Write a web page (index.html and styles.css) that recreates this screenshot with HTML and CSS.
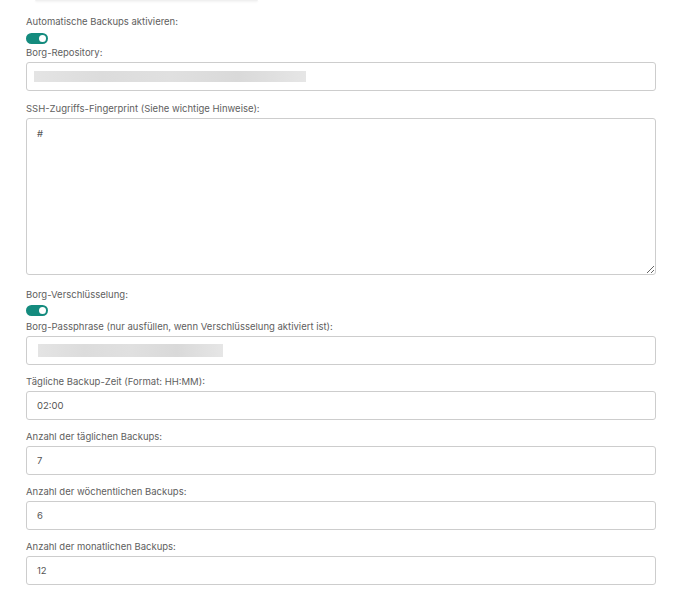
FILE: index.html
```html
<!DOCTYPE html>
<html lang="de">
<head>
<meta charset="utf-8">
<title>Backup-Einstellungen</title>
<link rel="stylesheet" href="styles.css">
</head>
<body>
<div class="page">
  <div class="topbar"></div>

  <div class="field">
    <label class="label">Automatische Backups aktivieren:</label>
    <span class="toggle on"><span class="knob"></span></span>
  </div>

  <div class="field">
    <label class="label">Borg-Repository:</label>
    <div class="input"><span class="blur blur-repo"></span></div>
  </div>

  <div class="field field-ssh">
    <label class="label">SSH-Zugriffs-Fingerprint (Siehe wichtige Hinweise):</label>
    <textarea class="textarea">#</textarea>
  </div>

  <div class="field">
    <label class="label">Borg-Verschlüsselung:</label>
    <span class="toggle on second"><span class="knob"></span></span>
  </div>

  <div class="field">
    <label class="label">Borg-Passphrase (nur ausfüllen, wenn Verschlüsselung aktiviert ist):</label>
    <div class="input"><span class="blur blur-pass"></span></div>
  </div>

  <div class="field">
    <label class="label">Tägliche Backup-Zeit (Format: HH:MM):</label>
    <div class="input">02:00</div>
  </div>

  <div class="field">
    <label class="label">Anzahl der täglichen Backups:</label>
    <div class="input">7</div>
  </div>

  <div class="field">
    <label class="label">Anzahl der wöchentlichen Backups:</label>
    <div class="input">6</div>
  </div>

  <div class="field">
    <label class="label">Anzahl der monatlichen Backups:</label>
    <div class="input">12</div>
  </div>
</div>
</body>
</html>
```

FILE: styles.css
```css
html, body {
  margin: 0;
  padding: 0;
  background: #ffffff;
}
body {
  font-family: Inter, "Noto Sans", "Liberation Sans", sans-serif;
  font-size: 9.5px;
  color: #5c5c5c;
}
.page {
  width: 630px;
  padding-left: 26px;
  display: flex;
  flex-direction: column;
}
.topbar {
  margin-left: 9px;
  width: 223px;
  height: 1px;
  background: #f0f0f0;
  box-shadow: 0 1px 2px rgba(0,0,0,0.08);
  border-radius: 0 0 3px 3px;
  margin-bottom: 14px;
}
.field {
  display: flex;
  flex-direction: column;
  margin-bottom: 10px;
}
.field-ssh {
  margin-top: 1px;
}
.label {
  display: block;
  line-height: 14px;
  font-size: 9.5px;
  color: #606060;
  margin-bottom: 2px;
}
.toggle {
  position: relative;
  display: block;
  width: 22px;
  height: 11px;
  border-radius: 6px;
  background: #148b7e;
  margin-top: 2px;
  margin-bottom: -8px;
}
.toggle .knob {
  position: absolute;
  right: 2px;
  top: 2px;
  width: 7px;
  height: 7px;
  border-radius: 50%;
  background: #ffffff;
}
.toggle.second {
  margin-top: 1px;
  margin-bottom: -6px;
}
.input {
  box-sizing: border-box;
  height: 29px;
  width: 630px;
  border: 1px solid #cdcdcd;
  border-radius: 3px;
  padding: 0 10px;
  display: flex;
  align-items: center;
  color: #555555;
  font-size: 9.5px;
  background: #ffffff;
}
.blur {
  display: block;
  height: 11px;
  background: linear-gradient(90deg, #e4e4e4 0%, #dcdcdc 25%, #e0e0e0 50%, #d9d9d9 75%, #e6e6e6 100%);
  filter: blur(0.6px);
  margin-left: -3px;
}
.blur-repo {
  width: 272px;
}
.blur-pass {
  width: 185px;
  height: 13px;
  margin-left: 1px;
}
.textarea {
  box-sizing: border-box;
  display: block;
  width: 630px;
  height: 157px;
  border: 1px solid #cdcdcd;
  border-radius: 3px;
  padding: 9px 10px;
  font-family: Inter, "Noto Sans", "Liberation Sans", sans-serif;
  font-size: 9.5px;
  color: #555555;
  resize: both;
  margin: 0 0 3px 0;
  outline: none;
}
```
